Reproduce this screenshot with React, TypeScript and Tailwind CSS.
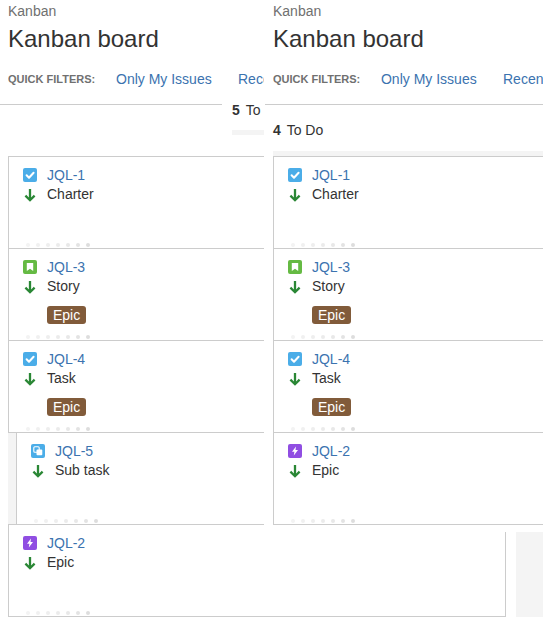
const ICONS = {
  check: (
    <svg viewBox="0 0 14 14" className="w-[14px] h-[14px] block">
      <rect width="14" height="14" rx="2" fill="#4bade8" />
      <path d="M3.6 7.3l2.4 2.4 4.6-5" fill="none" stroke="#fff" strokeWidth="2" strokeLinecap="round" strokeLinejoin="round" />
    </svg>
  ),
  story: (
    <svg viewBox="0 0 14 14" className="w-[14px] h-[14px] block">
      <rect width="14" height="14" rx="2" fill="#65ba43" />
      <path d="M3.8 3h6.4v8L7 8.8 3.8 11z" fill="#fff" />
    </svg>
  ),
  sub: (
    <svg viewBox="0 0 14 14" className="w-[14px] h-[14px] block">
      <rect width="14" height="14" rx="2" fill="#4bade8" />
      <rect x="2.8" y="2.8" width="5.4" height="5.4" rx="1" fill="none" stroke="#fff" strokeWidth="1.1" />
      <rect x="5.5" y="5.5" width="5.8" height="5.8" rx="1" fill="#fff" />
    </svg>
  ),
  epic: (
    <svg viewBox="0 0 14 14" className="w-[14px] h-[14px] block">
      <rect width="14" height="14" rx="2" fill="#904ee2" />
      <path d="M8 2.5L4 7.8h2.4l-.6 3.7 4.2-5.4H7.5z" fill="#fff" />
    </svg>
  ),
};

function Arrow() {
  return (
    <svg viewBox="0 0 14 14" className="w-[14px] h-[14px] block">
      <path d="M7 1v11M2.4 7.6L7 12.2l4.6-4.6" fill="none" stroke="#2a8735" strokeWidth="2.3" />
    </svg>
  );
}

function Dots() {
  const tones = ["bg-[#f3f3f3]", "bg-[#f0f0f0]", "bg-[#eeeeee]", "bg-[#ebebeb]", "bg-[#e8e8e8]", "bg-[#e3e3e3]", "bg-[#dddddd]"];
  return (
    <div className="absolute left-[17px] bottom-[1px] flex gap-[6px]">
      {tones.map((t, i) => (
        <span key={i} className={`w-1 h-1 rounded-full ${t}`} />
      ))}
    </div>
  );
}

type CardProps = { icon: keyof typeof ICONS; id: string; title: string; epic?: boolean };

function CardBody({ icon, id, title, epic }: CardProps) {
  return (
    <>
      <div className="flex h-5 items-center gap-[10px] mt-[8px]">
        <span className="w-[14px]">{ICONS[icon]}</span>
        <span className="text-[14px] text-[#3b73af]">{id}</span>
      </div>
      <div className="flex gap-[10px] h-5 items-start mt-[-1px]">
        <span className="w-[14px] pt-[3px] mt-[1px]"><Arrow /></span>
        <span className="text-[14px] leading-5 text-[#333333]">{title}</span>
      </div>
      {epic && (
        <span className="ml-6 mt-[10px] inline-block h-[18px] px-[6px] rounded-[3px] bg-[#815b3a] text-white text-[14px] leading-[18px]">
          Epic
        </span>
      )}
      <Dots />
    </>
  );
}

function Card(p: CardProps) {
  return (
    <div className="relative h-[92px] border-t border-l border-[#cccccc] pl-[14px] overflow-hidden">
      <CardBody {...p} />
    </div>
  );
}

function Header() {
  return (
    <div className="h-[105px] border-b border-[#cccccc]">
      <div className="pl-2">
        <div className="h-[18px] pt-[2px] text-[14px] leading-[18px] text-[#707070]">Kanban</div>
        <div className="mt-[1px] h-[40px] text-[24px] leading-[40px] text-[#333333]">Kanban board</div>
        <div className="mt-[10px] flex h-5 items-center whitespace-nowrap overflow-hidden">
          <span className="text-[11px] font-bold text-[#707070] w-[108px] shrink-0">QUICK FILTERS:</span>
          <span className="text-[14px] text-[#3b73af] w-[122px] shrink-0">Only My Issues</span>
          <span className="text-[14px] text-[#3b73af] min-w-0 overflow-hidden">Recent</span>
        </div>
      </div>
    </div>
  );
}

export default function App() {
  return (
    <div className="w-[543px] h-[627px] overflow-hidden bg-white [font-family:'Liberation_Sans',Arial,sans-serif]">
      <div className="flex h-[525px]">
        <div className="w-[264px] shrink-0">
          <div className="relative">
            <Header />
            <div className="absolute left-[222px] top-[100px] w-[42px] h-[36px] bg-white pl-[10px]">
              <div className="text-[14px] leading-5 text-[#333333]">
                <b>5</b> <span className="ml-[2px]">To</span>
              </div>
              <div className="mt-[10px] h-[5px] bg-[#f4f4f4]" />
            </div>
          </div>
          <div className="pt-[51px] pl-2">
            <Card icon="check" id="JQL-1" title="Charter" />
            <Card icon="story" id="JQL-3" title="Story" epic />
            <Card icon="check" id="JQL-4" title="Task" epic />
            <div className="border-t border-[#cccccc] flex">
              <div className="w-2 shrink-0 bg-[#f4f4f4]" />
              <div className="grow relative h-[91px] border-l border-[#cccccc] pl-[14px]">
                <CardBody icon="sub" id="JQL-5" title="Sub task" />
              </div>
            </div>
            <div className="border-t border-[#cccccc]" />
          </div>
        </div>
        <div className="w-px" />
        <div className="grow min-w-0">
          <Header />
          <div className="pl-2">
            <div className="pt-[15px] h-[46px] text-[14px] leading-5 text-[#333333]">
              <b>4</b> <span className="ml-[2px]">To Do</span>
            </div>
            <div className="h-[5px] bg-[#f4f4f4]" />
            <Card icon="check" id="JQL-1" title="Charter" />
            <Card icon="story" id="JQL-3" title="Story" epic />
            <Card icon="check" id="JQL-4" title="Task" epic />
            <Card icon="epic" id="JQL-2" title="Epic" />
            <div className="border-t border-l border-[#cccccc]" />
          </div>
        </div>
      </div>
      <div className="flex pl-2">
        <div className="relative w-[497px] h-[92px] border-l border-b border-[#cccccc] pl-[14px]">
          <CardBody icon="epic" id="JQL-2" title="Epic" />
        </div>
        <div className="w-px mt-[7px] h-[85px] bg-[#cccccc]" />
        <div className="ml-[10px] w-[27px] mt-[7px] h-[85px] bg-[#f4f4f4]" />
      </div>
    </div>
  );
}
